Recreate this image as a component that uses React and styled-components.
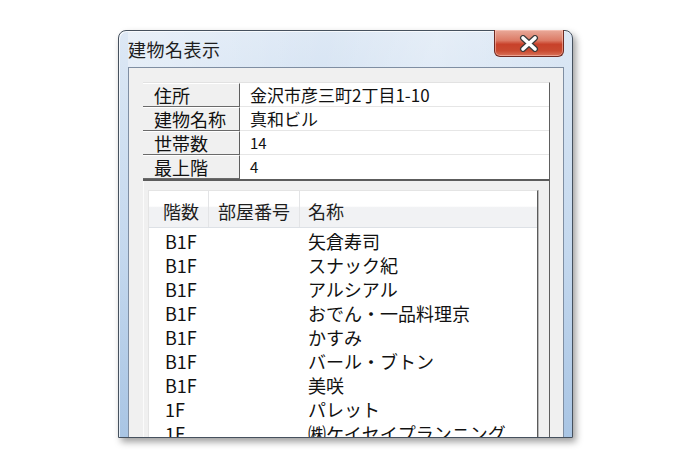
import React from "react";
import styled, { createGlobalStyle } from "styled-components";

const Global = createGlobalStyle`
  html, body { margin: 0; padding: 0; background: #ffffff; }
  body { width: 700px; height: 466px; overflow: hidden; }
  * { box-sizing: border-box; }
`;

const JP = `"Noto Sans CJK JP", "Noto Sans", sans-serif`;

const Page = styled.div`
  width: 700px;
  height: 466px;
  padding: 30px 0 0 118px;
  background: #fff;
`;

const Window = styled.div`
  width: 455px;
  height: 408px;
  display: flex;
  flex-direction: column;
  padding: 0 8px 0 9px;
  border: 1px solid #46515e;
  border-radius: 8px 8px 0 0;
  background: linear-gradient(180deg, #dde8f5 0%, #d3e2f2 20%, #c4d8ee 55%, #a9c5e4 100%);
  box-shadow: 3px 4px 7px rgba(0, 0, 0, 0.38), inset 1px 1px 0 rgba(255, 255, 255, 0.7);
`;

const TitleBar = styled.div`
  height: 36px;
  flex: none;
  display: flex;
  align-items: flex-start;
  justify-content: space-between;
  background: linear-gradient(100deg, rgba(255,255,255,0.35) 0%, rgba(255,255,255,0) 45%, rgba(255,255,255,0.25) 70%, rgba(255,255,255,0) 100%);
`;

const Title = styled.div`
  font-family: ${JP};
  font-size: 18px;
  line-height: 22px;
  color: #1e1e1e;
  padding-top: 7px;
  letter-spacing: 0.5px;
`;

const CloseButton = styled.div`
  width: 70px;
  height: 27px;
  margin-top: -1px;
  display: flex;
  align-items: center;
  justify-content: center;
  border: 1px solid #6f2a22;
  border-top: none;
  border-radius: 0 0 6px 6px;
  background: linear-gradient(180deg, #e9aa9a 0%, #dc7b66 40%, #c8412a 55%, #c94a30 80%, #d9735a 100%);
  box-shadow: inset 0 0 0 1px rgba(255, 210, 200, 0.5);
`;

const Client = styled.div`
  flex: 1;
  min-height: 0;
  display: flex;
  flex-direction: column;
  border: 1px solid #7f8ea2;
  border-bottom: none;
  background: #f0f0f0;
  padding: 14px 13px 0 14px;
  overflow: hidden;
`;

const InfoGrid = styled.div`
  display: grid;
  grid-template-columns: 97px 1fr;
  border-top: 1px solid #e2e2e2;
  border-right: 1px solid #5e5e5e;
  border-bottom: 2px solid #5c5c5c;
  background: #fff;
`;

const Label = styled.div`
  height: 24px;
  padding-left: 11px;
  font-family: ${JP};
  font-size: 18px;
  line-height: 24px;
  color: #111;
  background: #f0f0f0;
  border-top: 1px solid #ffffff;
  border-right: 1px solid #5e5e5e;
  border-bottom: 1px solid #6a6a6a;
  display: flex;
  align-items: center;
`;

const Value = styled.div`
  height: 24px;
  padding-left: 10px;
  font-family: ${JP};
  font-size: ${(p) => (p.$num ? "15px" : "17px")};
  color: #111;
  border-bottom: 1px solid ${(p) => (p.$last ? "transparent" : "#e6e6e6")};
  display: flex;
  align-items: center;
`;

const ListPanel = styled.div`
  flex: 1;
  min-height: 0;
  padding: 9px 11px 0 4px;
  border-left: 1px solid #fbfbfb;
  border-right: 1px solid #5e5e5e;
  display: flex;
`;

const ListView = styled.div`
  flex: 1;
  background: #fff;
  border-top: 1px solid #e4e4e4;
  border-left: 1px solid #e4e4e4;
  border-right: 1px solid #5a5a5a;
  box-shadow: 1px 0 0 #b8b8b8;
  overflow: hidden;
`;

const Cols = styled.div`
  display: grid;
  grid-template-columns: 60px 91px 1fr;
`;

const Header = styled(Cols)`
  height: 37px;
  background: linear-gradient(180deg, #ffffff 0%, #ffffff 42%, #f1f2f4 46%, #f1f2f4 100%);
  border-bottom: 1px solid #dde1e6;
`;

const HeadCell = styled.div`
  font-family: ${JP};
  font-size: 18px;
  color: #1e1e1e;
  padding: 4px 0 0 ${(p) => p.$pad}px;
  display: flex;
  align-items: center;
  border-right: 1px solid ${(p) => (p.$sep ? "#e3e4e6" : "transparent")};
`;

const Row = styled(Cols)`
  height: 24px;
`;

const Cell = styled.div`
  font-family: ${JP};
  font-size: 18px;
  color: #111;
  padding-left: ${(p) => p.$pad}px;
  display: flex;
  align-items: center;
  white-space: nowrap;
`;

const info = [
  ["住所", "金沢市彦三町2丁目1-10"],
  ["建物名称", "真和ビル"],
  ["世帯数", "14", true],
  ["最上階", "4", true],
];

const rows = [
  ["B1F", "", "矢倉寿司"],
  ["B1F", "", "スナック紀"],
  ["B1F", "", "アルシアル"],
  ["B1F", "", "おでん・一品料理京"],
  ["B1F", "", "かすみ"],
  ["B1F", "", "バール・ブトン"],
  ["B1F", "", "美咲"],
  ["1F", "", "パレット"],
  ["1F", "", "㈱ケイセイプランニング"],
];

const CloseIcon = () => (
  <svg width="20" height="17" viewBox="0 0 20 17">
    <path d="M4 3 L16 14 M16 3 L4 14" stroke="#3b3b3b" strokeWidth="6" strokeLinecap="round" fill="none" />
    <path d="M4 3 L16 14 M16 3 L4 14" stroke="#ffffff" strokeWidth="3.6" strokeLinecap="round" fill="none" />
  </svg>
);

export default function App() {
  return (
    <>
      <Global />
      <Page>
        <Window>
          <TitleBar>
            <Title>建物名表示</Title>
            <CloseButton>
              <CloseIcon />
            </CloseButton>
          </TitleBar>
          <Client>
            <InfoGrid>
              {info.map(([k, v, num], i) => (
                <React.Fragment key={k}>
                  <Label>{k}</Label>
                  <Value $num={num} $last={i === info.length - 1}>{v}</Value>
                </React.Fragment>
              ))}
            </InfoGrid>
            <ListPanel>
              <ListView>
                <Header>
                  <HeadCell $pad={14} $sep>階数</HeadCell>
                  <HeadCell $pad={9} $sep>部屋番号</HeadCell>
                  <HeadCell $pad={8}>名称</HeadCell>
                </Header>
                {rows.map((r, i) => (
                  <Row key={i}>
                    <Cell $pad={16}>{r[0]}</Cell>
                    <Cell $pad={9}>{r[1]}</Cell>
                    <Cell $pad={8}>{r[2]}</Cell>
                  </Row>
                ))}
              </ListView>
            </ListPanel>
          </Client>
        </Window>
      </Page>
    </>
  );
}
